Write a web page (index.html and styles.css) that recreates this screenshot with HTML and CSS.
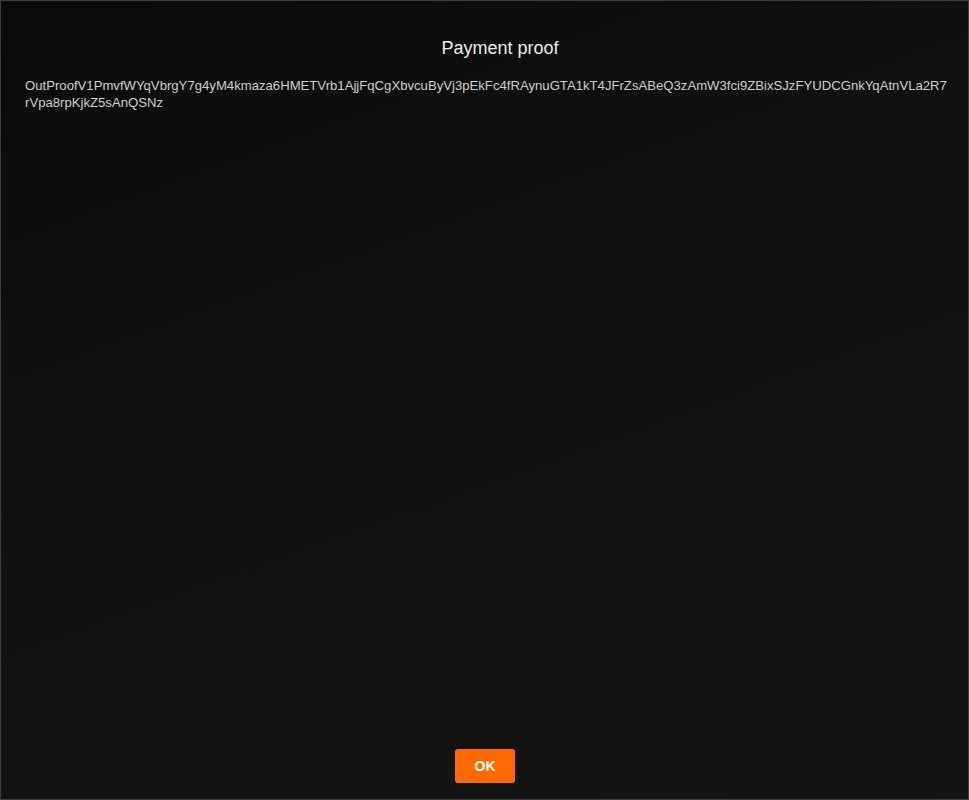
FILE: index.html
```html
<!DOCTYPE html>
<html>
<head>
<meta charset="utf-8">
<link rel="stylesheet" href="styles.css">
</head>
<body>
<div class="dialog">
  <h1 class="title">Payment proof</h1>
  <div class="proof">OutProofV1PmvfWYqVbrgY7g4yM4kmaza6HMETVrb1AjjFqCgXbvcuByVj3pEkFc4fRAynuGTA1kT4JFrZsABeQ3zAmW3fci9ZBixSJzFYUDCGnkYqAtnVLa2R7rVpa8rpKjkZ5sAnQSNz</div>
  <div class="actions">
    <button class="ok">OK</button>
  </div>
</div>
</body>
</html>
```
FILE: styles.css
```css
html, body {
  margin: 0;
  padding: 0;
  background: #0e0e0e;
}
.dialog {
  box-sizing: border-box;
  width: 969px;
  height: 800px;
  border: 1px solid #3d3d3d;
  background: linear-gradient(160deg, #0a0a0a 0%, #111111 45%, #141414 100%);
  display: flex;
  flex-direction: column;
  padding: 0 20px 16px 24px;
  font-family: "Liberation Sans", Arial, sans-serif;
}
.title {
  margin: 37px 0 0 27px;
  font-size: 18px;
  font-weight: normal;
  color: #ececec;
  text-align: center;
  line-height: 20px;
}
.proof {
  margin-top: 19px;
  font-size: 13.15px;
  line-height: 17px;
  color: #cfcfcf;
  word-break: break-all;
}
.actions {
  margin-top: auto;
  display: flex;
  justify-content: center;
}
.ok {
  width: 60px;
  height: 34px;
  border: none;
  border-radius: 3px;
  background: #ff6a00;
  color: #ffffff;
  font-family: "Liberation Sans", Arial, sans-serif;
  font-weight: bold;
  font-size: 14px;
  padding: 0;
  margin-left: -3px;
}
```
